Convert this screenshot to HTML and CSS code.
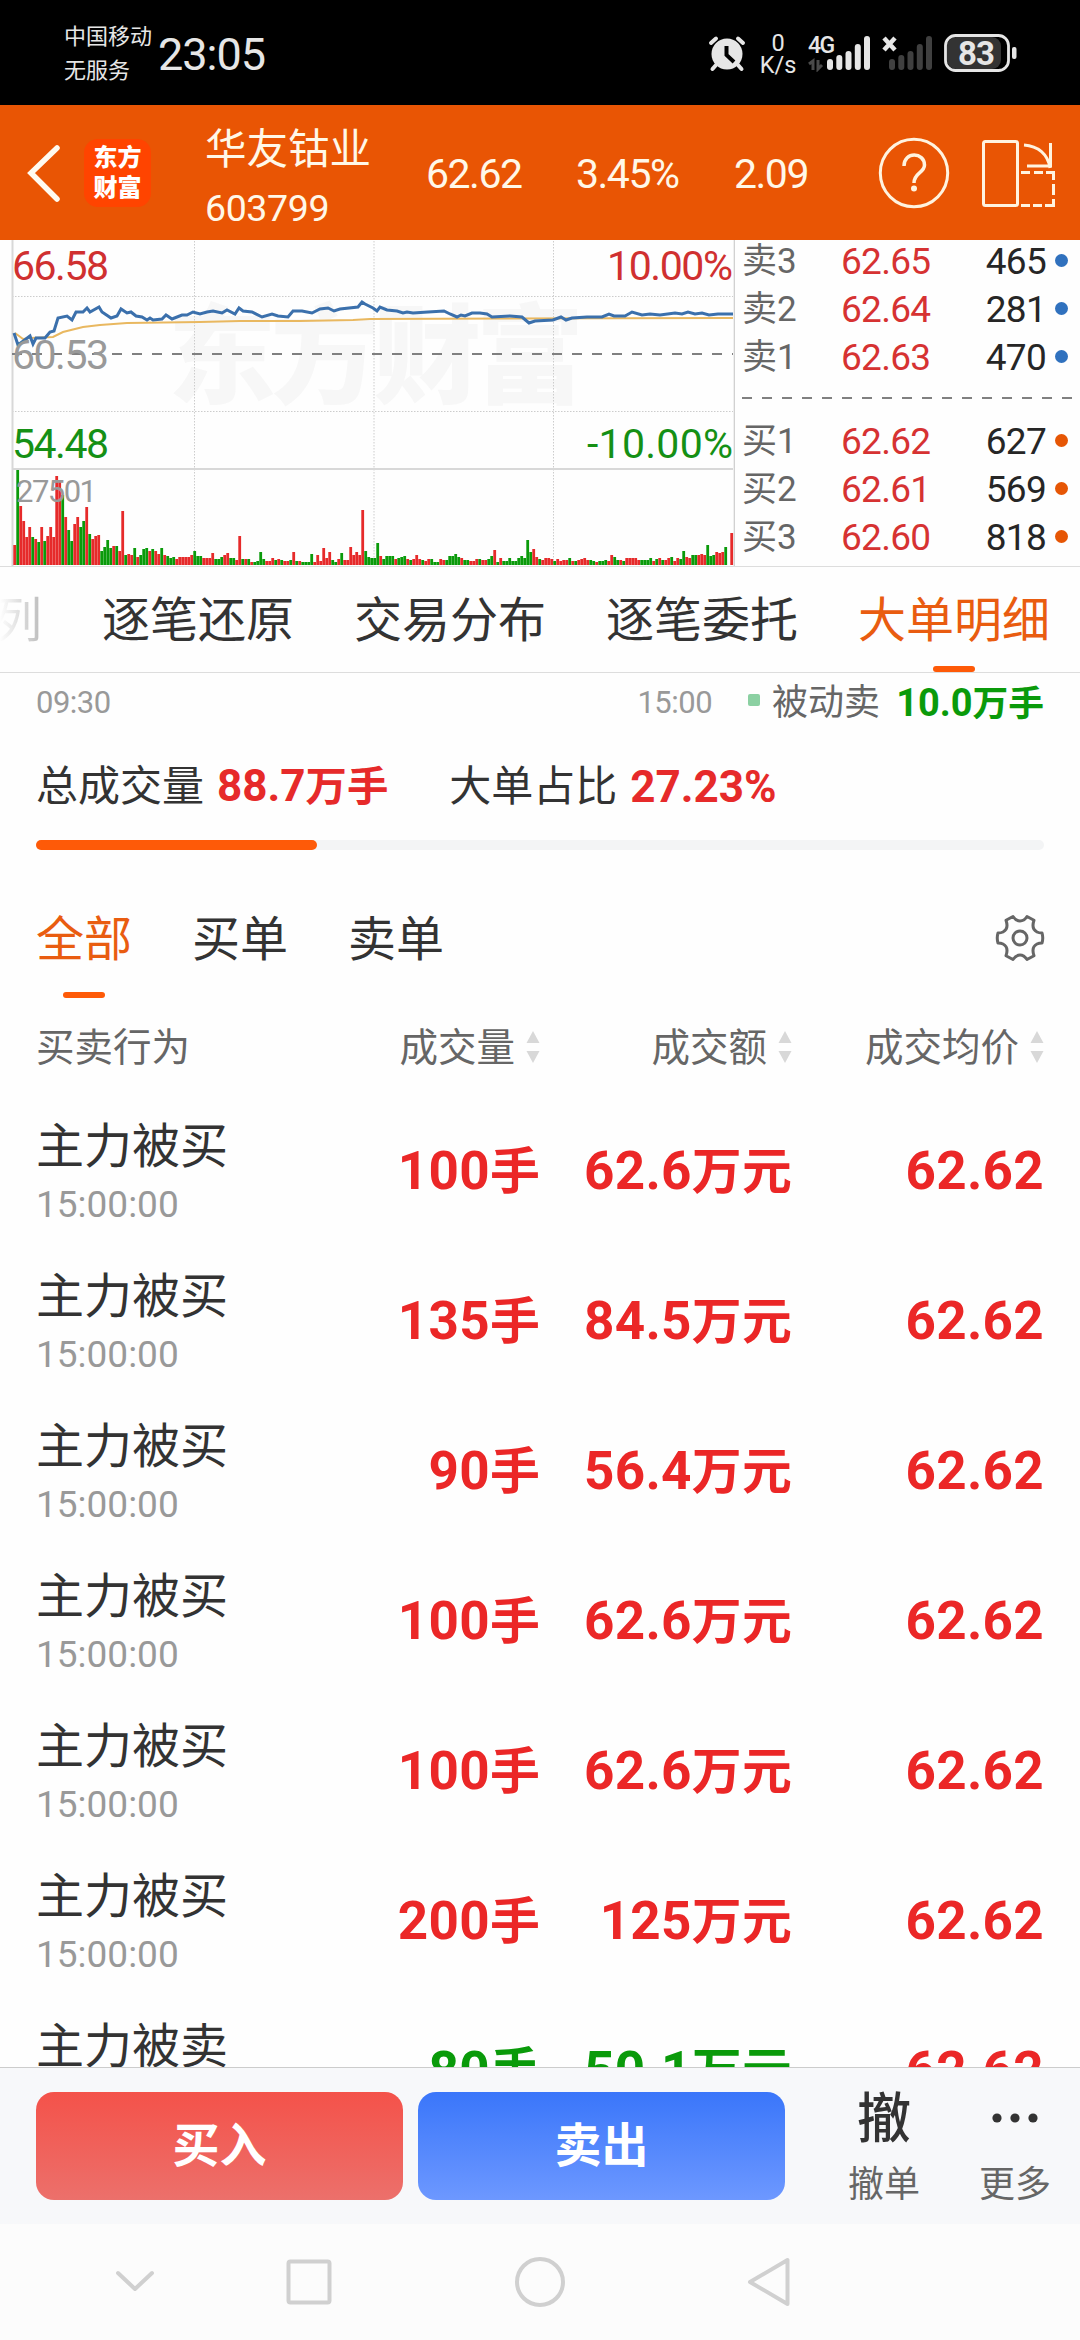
FILE: index.html
```html
<!DOCTYPE html>
<html lang="zh-CN">
<head>
    <meta charset="UTF-8">
    <meta name="viewport" content="width=device-width, initial-scale=1.0">
    <title>华友钴业 603799</title>
    <link rel="stylesheet" href="styles.css">
</head>
<body>
    <div class="statusbar">
        <div class="carrier">
            <span>中国移动</span>
            <span>无服务</span>
        </div>
        <div class="clock">23:05</div>
        <svg class="status-alarm" width="38" height="38" viewBox="0 0 38 38">
            <circle cx="19" cy="20" r="15.500" fill="#e6e6e6"/>
            <path d="M3 9 L8 4.500 M30 4.500 L35 9 M8 31 L4.500 35 M30 31 L33.500 35" stroke="#e6e6e6" stroke-width="4" stroke-linecap="round"/>
            <path d="M18.500 12 V21 L26 28" fill="none" stroke="#000" stroke-width="4"/>
        </svg>
        <div class="netspeed"><span>0</span><span>K/s</span></div>
        <svg class="status-signal" width="64" height="38" viewBox="0 0 64 38">
            <g fill="#e6e6e6">
                <rect x="19" y="25" width="6" height="11" rx="3"/>
                <rect x="28.300" y="21" width="6" height="15" rx="3"/>
                <rect x="37.500" y="17" width="6" height="19" rx="3"/>
                <rect x="46.800" y="10" width="6" height="26" rx="3"/>
                <rect x="56" y="2" width="6" height="34" rx="3"/>
            </g>
            <path d="M1 30 L5 27 V36 M10 26 V35 L14 31" fill="none" stroke="#4a4a4a" stroke-width="3"/>
            <text x="0" y="18.500" class="signal-type">4G</text>
        </svg>
        <svg class="status-nosim" width="52" height="38" viewBox="0 0 52 38">
            <path d="M2 4 L13 16 M13 4 L2 16" stroke="#e6e6e6" stroke-width="4.500"/>
            <g fill="#404040">
                <rect x="7" y="25" width="6" height="11" rx="3"/>
                <rect x="16.300" y="21" width="6" height="15" rx="3"/>
                <rect x="25.500" y="17" width="6" height="19" rx="3"/>
                <rect x="34.800" y="10" width="6" height="26" rx="3"/>
                <rect x="44" y="2" width="6" height="34" rx="3"/>
            </g>
        </svg>
        <svg class="status-battery" width="74" height="38" viewBox="0 0 74 38">
            <rect x="3" y="3" width="54" height="32" rx="9" fill="#333"/>
            <rect x="1.500" y="1.500" width="63" height="35" rx="10" fill="none" stroke="#e6e6e6" stroke-width="2.800"/>
            <rect x="68" y="13" width="4.500" height="12" rx="2" fill="#e6e6e6"/>
            <text x="32" y="30.500" text-anchor="middle" class="battery-num">83</text>
        </svg>
    </div>

    <header class="header">
        <svg class="back" width="36" height="60" viewBox="0 0 36 60">
            <path d="M31 5 L5 30 L31 56" fill="none" stroke="#fffaf0" stroke-width="5.500" stroke-linecap="round"/>
        </svg>
        <div class="logo"><span>东方</span><span>财富</span></div>
        <div class="stock">
            <span class="stock-name">华友钴业</span>
            <span class="stock-code">603799</span>
        </div>
        <div class="quote">
            <span class="q-price">62.62</span>
            <span class="q-pct">3.45%</span>
            <span class="q-chg">2.09</span>
        </div>
        <svg class="help" width="72" height="72" viewBox="0 0 72 72">
            <circle cx="36" cy="36" r="33.700" fill="none" stroke="#fff3df" stroke-width="3"/>
            <path d="M26 29 C26 14 46.500 15 46.500 28 C46.500 36 36 35.500 36 46" fill="none" stroke="#fff3df" stroke-width="3.500"/>
            <circle cx="36" cy="51.500" r="3" fill="#fff3df"/>
        </svg>
        <svg class="rotate" width="76" height="72" viewBox="0 0 76 72">
            <g fill="none" stroke="#fff3df" stroke-width="3">
                <rect x="3.500" y="4.500" width="34" height="64" rx="2"/>
                <path d="M44 8 C58 9 68 17 70 31 M70.500 6 V29 H47"/>
                <path d="M41 35.500 H50 M54 35.500 H63 M66 35.500 H73.500 V43 M73.500 47 V58 M73.500 62 V68.500 H65 M62 68.500 H53 M50 68.500 H41"/>
            </g>
        </svg>
    </header>

    <section class="market">
        <svg class="chart" width="735" height="326" viewBox="0 0 735 326">
            <text x="168" y="155" class="watermark" textLength="416">东方财富</text>
            <g stroke="#ccc" stroke-width="1" stroke-dasharray="1.500 1.500">
                <path d="M12 56.500 H733 M12 171.500 H733 M194.500 1 V325 M374 1 V325 M553.500 1 V325"/>
            </g>
            <path d="M12.500 0 V326 M12 229 H733" stroke="#d8d8d8" stroke-width="2"/>
            <path d="M734.300 0 V326" stroke="#ccc" stroke-width="1.200"/>
            <path d="M12 114 H733" stroke="#808080" stroke-width="2" stroke-dasharray="10 10"/>
            <g id="volume"></g>
            <polyline id="average" fill="none" stroke="#e9b860" stroke-width="2"/>
            <polyline id="price" fill="none" stroke="#3b70ac" stroke-width="3"/>
            <text x="12" y="40" class="axis up" textLength="97">66.58</text>
            <text x="12" y="129" class="axis mid" textLength="97">60.53</text>
            <text x="12" y="218" class="axis down" textLength="97">54.48</text>
            <text x="607" y="40" class="axis up" textLength="126">10.00%</text>
            <text x="587" y="218" class="axis down" textLength="146">-10.00%</text>
            <text x="16" y="262" class="axis vol" textLength="81">27501</text>
        </svg>
        <div class="book">
            <div class="level"><span class="side">卖3</span><span class="price">62.65</span><span class="qty">465</span><i class="dot sell"></i></div>
            <div class="level"><span class="side">卖2</span><span class="price">62.64</span><span class="qty">281</span><i class="dot sell"></i></div>
            <div class="level"><span class="side">卖1</span><span class="price">62.63</span><span class="qty">470</span><i class="dot sell"></i></div>
            <svg class="book-split" width="332" height="36" viewBox="0 0 332 36">
                <path d="M0 16 H332" stroke="#808080" stroke-width="2" stroke-dasharray="10 10"/>
            </svg>
            <div class="level"><span class="side">买1</span><span class="price">62.62</span><span class="qty">627</span><i class="dot buy"></i></div>
            <div class="level"><span class="side">买2</span><span class="price">62.61</span><span class="qty">569</span><i class="dot buy"></i></div>
            <div class="level"><span class="side">买3</span><span class="price">62.60</span><span class="qty">818</span><i class="dot buy"></i></div>
        </div>
    </section>

    <nav class="tabs">
        <span class="tab cut">列</span>
        <span class="tab">逐笔还原</span>
        <span class="tab">交易分布</span>
        <span class="tab">逐笔委托</span>
        <span class="tab active">大单明细</span>
    </nav>

    <main class="detail">
        <div class="axis-row">
            <span class="time-start">09:30</span>
            <span class="time-end">15:00</span>
            <i class="legend"></i>
            <span class="legend-name">被动卖</span>
            <b class="legend-val">10.0<small>万手</small></b>
        </div>
        <div class="summary">
            <span>总成交量</span><b class="sum-vol">88.7<small>万手</small></b>
            <span>大单占比</span><b class="sum-pct">27.23%</b>
        </div>
        <div class="progress"><div class="progress-fill" style="width: 27.900%"></div></div>

        <div class="filters">
            <span class="filter active">全部</span>
            <span class="filter">买单</span>
            <span class="filter">卖单</span>
            <svg class="gear" width="52" height="52" viewBox="0 0 52 52">
                <g fill="none" stroke="#666" stroke-width="3" stroke-linejoin="round">
                    <path d="M19 4.500 Q22 9 26 9 Q30 9 33 4.500 L40 8.300 Q37 17 43 20 Q45 21 48 21 Q49.500 26 48 31 Q45 31 43 32 Q37 35 40 43.700 L33 47.500 Q30 43 26 43 Q22 43 19 47.500 L12 43.700 Q15 35 9 32 Q7 31 4 31 Q2.500 26 4 21 Q7 21 9 20 Q15 17 12 8.300 Z"/>
                    <circle cx="26" cy="26" r="7"/>
                </g>
            </svg>
        </div>

        <div class="row thead">
            <span class="c-act">买卖行为</span>
            <span class="c-vol">成交量<svg class="sort" width="14" height="34" viewBox="0 0 14 34"><path d="M7 1 L13.500 13 H.5 Z M7 33 L13.500 21 H.5 Z"/></svg></span>
            <span class="c-amt">成交额<svg class="sort" width="14" height="34" viewBox="0 0 14 34"><path d="M7 1 L13.500 13 H.5 Z M7 33 L13.500 21 H.5 Z"/></svg></span>
            <span class="c-avg">成交均价<svg class="sort" width="14" height="34" viewBox="0 0 14 34"><path d="M7 1 L13.500 13 H.5 Z M7 33 L13.500 21 H.5 Z"/></svg></span>
        </div>

        <div class="list">
            <div class="row order">
                <div class="c-act"><span>主力被买</span><time>15:00:00</time></div>
                <b class="c-vol">100<small>手</small></b><b class="c-amt">62.6<small>万元</small></b><b class="c-avg">62.62</b>
            </div>
            <div class="row order">
                <div class="c-act"><span>主力被买</span><time>15:00:00</time></div>
                <b class="c-vol">135<small>手</small></b><b class="c-amt">84.5<small>万元</small></b><b class="c-avg">62.62</b>
            </div>
            <div class="row order">
                <div class="c-act"><span>主力被买</span><time>15:00:00</time></div>
                <b class="c-vol">90<small>手</small></b><b class="c-amt">56.4<small>万元</small></b><b class="c-avg">62.62</b>
            </div>
            <div class="row order">
                <div class="c-act"><span>主力被买</span><time>15:00:00</time></div>
                <b class="c-vol">100<small>手</small></b><b class="c-amt">62.6<small>万元</small></b><b class="c-avg">62.62</b>
            </div>
            <div class="row order">
                <div class="c-act"><span>主力被买</span><time>15:00:00</time></div>
                <b class="c-vol">100<small>手</small></b><b class="c-amt">62.6<small>万元</small></b><b class="c-avg">62.62</b>
            </div>
            <div class="row order">
                <div class="c-act"><span>主力被买</span><time>15:00:00</time></div>
                <b class="c-vol">200<small>手</small></b><b class="c-amt">125<small>万元</small></b><b class="c-avg">62.62</b>
            </div>
            <div class="row order sold">
                <div class="c-act"><span>主力被卖</span></div>
                <b class="c-vol">80<small>手</small></b><b class="c-amt">50.1<small>万元</small></b><b class="c-avg">62.62</b>
            </div>
        </div>
    </main>

    <footer class="trade">
        <button class="btn btn-buy">买入</button>
        <button class="btn btn-sell">卖出</button>
        <div class="action cancel">
            <span class="action-icon">撤</span>
            <span class="action-name">撤单</span>
        </div>
        <div class="action more">
            <svg class="action-icon" width="48" height="54" viewBox="0 0 48 54">
                <g fill="#333"><circle cx="6" cy="26" r="4.600"/><circle cx="24" cy="26" r="4.600"/><circle cx="42" cy="26" r="4.600"/></g>
            </svg>
            <span class="action-name">更多</span>
        </div>
    </footer>

    <div class="navbar">
        <svg width="1080" height="116" viewBox="0 0 1080 116">
            <g fill="none" stroke="#d0d0d0" stroke-width="4" stroke-linecap="round" stroke-linejoin="round">
                <path d="M118 49 L135 65 L152 49"/>
                <rect x="288.500" y="37.500" width="41" height="41" rx="2"/>
                <circle cx="540" cy="58" r="23"/>
                <path d="M787.500 36 V80 L750 58 Z"/>
            </g>
        </svg>
    </div>

    <script src="chart.js"></script>
</body>
</html>
```

FILE: styles.css
```css
* {
    box-sizing: border-box;
}
body {
    margin: 0;
    width: 1080px;
    height: 2340px;
    overflow: hidden;
    display: flex;
    flex-direction: column;
    background: #fefefe;
    color: #333;
    font-family: Roboto, "Noto Sans CJK SC", sans-serif;
}
span, b, time {
    white-space: nowrap;
}
small {
    font-size: 0.94em;
}

/* status bar */
.statusbar {
    flex: none;
    height: 105px;
    padding: 0 59px 0 64px;
    background: #000;
    color: #e6e6e6;
    display: flex;
    align-items: center;
}
.carrier {
    flex: none;
    width: 94px;
    display: flex;
    flex-direction: column;
    font-size: 22px;
    line-height: 34px;
    padding-top: 3px;
}
.clock {
    width: 550px;
    padding-top: 4px;
    font-size: 45px;
    line-height: 50px;
    letter-spacing: -1px;
}
.statusbar svg {
    flex: none;
}
.status-alarm {
    margin-right: 14px;
}
.netspeed {
    flex: none;
    width: 36px;
    margin-right: 12px;
    display: flex;
    flex-direction: column;
    align-items: center;
    font-size: 23.500px;
    line-height: 22px;
    padding-top: 3px;
}
.signal-type {
    font-size: 23px;
    font-weight: 500;
    letter-spacing: -1.5px;
    fill: #e6e6e6;
}
.status-nosim {
    margin-left: 10px;
    margin-right: 10px;
}
.battery-num {
    font-size: 33px;
    font-weight: 700;
    letter-spacing: -1px;
    fill: #e6e6e6;
}

/* header */
.header {
    flex: none;
    height: 135px;
    padding: 0 24px 0 26px;
    background: #e95504;
    color: #fff8e8;
    display: flex;
    align-items: center;
}
.logo {
    width: 67px;
    height: 68px;
    margin-left: 22px;
    border-radius: 14px;
    background: #ff4400;
    color: #fff;
    display: flex;
    flex-direction: column;
    align-items: center;
    padding-top: 4px;
    font-size: 24px;
    font-weight: 900;
    line-height: 30px;
}
.stock {
    width: 221px;
    margin-left: 54px;
    padding-top: 13px;
    display: flex;
    flex-direction: column;
}
.stock-name {
    font-size: 41.500px;
    line-height: 58px;
}
.stock-code {
    font-size: 37.500px;
    line-height: 58px;
    letter-spacing: -0.4px;
}
.quote {
    display: flex;
    width: 452px;
    padding-top: 3px;
    font-size: 41px;
    line-height: 50px;
    letter-spacing: -1.5px;
}
.q-price {
    width: 150px;
}
.q-pct {
    width: 158px;
}
.rotate {
    margin-left: auto;
}

/* chart and order book */
.market {
    flex: none;
    height: 327px;
    display: flex;
    border-bottom: 1px solid #ddd;
}
.chart {
    flex: none;
    display: block;
}
.axis {
    font-size: 41px;
}
.up {
    fill: #d03030;
}
.down {
    fill: #159015;
}
.mid {
    fill: #999;
}
.vol {
    font-size: 31px;
    fill: #999;
}
.watermark {
    font-size: 108px;
    font-weight: 900;
    fill: #f7f7f7;
}
.book {
    flex: 1;
    padding-left: 7px;
    margin-top: -2px;
}
.level {
    display: flex;
    align-items: center;
    height: 48px;
    font-size: 37px;
    line-height: 48px;
    letter-spacing: -0.7px;
}
.side {
    width: 99px;
    font-size: 35px;
    letter-spacing: 0;
    color: #666;
}
.price {
    width: 106px;
    color: #d63232;
}
.qty {
    width: 99px;
    text-align: right;
    color: #262626;
}
.dot {
    width: 13px;
    height: 13px;
    margin-left: 9px;
    margin-bottom: 3px;
    border-radius: 50%;
}
.dot.sell {
    background: #3071be;
}
.dot.buy {
    background: #e65605;
}
.book-split {
    display: block;
}

/* tabs */
.tabs {
    flex: none;
    height: 106px;
    display: flex;
    gap: 60px;
    border-bottom: 1px solid #ddd;
}
.tab {
    position: relative;
    font-size: 48px;
    line-height: 108px;
}
.tab.cut {
    width: 42px;
    direction: rtl;
    background: linear-gradient(90deg, #fefefe, #bbb);
    -webkit-background-clip: text;
    background-clip: text;
    color: transparent;
}
.tab.active, .filter.active {
    color: #e95c10;
}
.tab.active::after, .filter.active::after {
    content: "";
    position: absolute;
    left: 50%;
    bottom: 0;
    width: 42px;
    height: 6px;
    margin-left: -21px;
    border-radius: 3px;
    background: #fe5a08;
}

/* big order detail */
.detail {
    flex: 1;
    min-height: 0;
    overflow: hidden;
    padding: 0 36px;
}
.axis-row {
    display: flex;
    align-items: center;
    height: 60px;
    font-size: 31px;
    line-height: 60px;
    color: #999;
}
.time-start, .time-end {
    letter-spacing: -0.5px;
}
.time-end {
    margin-left: auto;
}
.legend {
    width: 12px;
    height: 12px;
    margin: 0 12px 6px 36px;
    border-radius: 2px;
    background: #8bd0a2;
}
.legend-name {
    font-size: 36px;
    line-height: 58px;
    color: #666;
}
.legend-val {
    margin-left: 16px;
    font-size: 38px;
    line-height: 60px;
    color: #0a9a0a;
}
.summary {
    display: flex;
    align-items: center;
    height: 107px;
    font-size: 42px;
    line-height: 106px;
}
.summary b {
    margin-left: 13px;
    font-size: 44px;
    color: #e62a2a;
}
.summary .sum-vol {
    margin-right: 61px;
}
.progress {
    height: 10px;
    border-radius: 5px;
    background: #f3f4f5;
}
.progress-fill {
    height: 10px;
    border-radius: 5px;
    background: #fe5a08;
}
.filters {
    display: flex;
    align-items: flex-start;
    gap: 60px;
    height: 149px;
    padding-top: 28px;
}
.filter {
    position: relative;
    height: 120px;
    font-size: 48px;
    line-height: 123px;
}
.gear {
    margin: 34px -2px 0 auto;
}
.row {
    display: grid;
    grid-template-columns: 322px 182px 252px 252px;
}
.thead {
    height: 100px;
    line-height: 97px;
    font-size: 38.500px;
    color: #666;
}
.thead .c-act {
    text-align: left;
}
.c-vol, .c-amt, .c-avg {
    text-align: right;
}
.sort {
    margin-left: 11px;
    vertical-align: -3px;
    fill: #d8d8d8;
}
.order {
    height: 150px;
    font-size: 53px;
    line-height: 144px;
    color: #eb2727;
}
.order .c-act {
    display: flex;
    flex-direction: column;
    padding-top: 18px;
    font-size: 48px;
    line-height: 60px;
    color: #333;
}
.order time {
    font-size: 37px;
    line-height: 56px;
    color: #999;
}
.order b {
    letter-spacing: 0.3px;
}
.order.sold .c-vol, .order.sold .c-amt {
    color: #0a9a0a;
}

/* trade bar */
.trade {
    flex: none;
    height: 157px;
    padding: 24px 29px 0 36px;
    border-top: 1px solid #ccc;
    background: #f7f8fa;
    display: flex;
    align-items: flex-start;
}
.btn {
    width: 367px;
    height: 108px;
    padding: 0;
    border: none;
    border-radius: 18px;
    color: #fff;
    font-family: inherit;
    font-size: 47px;
    font-weight: 700;
    line-height: 108px;
}
.btn-buy {
    background: linear-gradient(#f4524a, #ec706b);
}
.btn-sell {
    margin-left: 15px;
    background: linear-gradient(#3a76fa, #6d98ff);
}
.action {
    width: 72px;
    display: flex;
    flex-direction: column;
    align-items: center;
}
.action .action-icon {
    height: 54px;
    font-size: 54px;
    font-weight: 500;
    line-height: 56px;
}
.action-name {
    margin-top: 15px;
    font-size: 36px;
    line-height: 48px;
    color: #666;
}
.cancel {
    margin-left: 63px;
}
.more {
    margin-left: auto;
}

/* system navigation */
.navbar {
    flex: none;
    height: 116px;
    background: #fcfcfc;
}
.navbar svg {
    display: block;
}
```

FILE: chart.js
```js
// one value per minute, positive = red bar, negative = green bar
const volumes = [
    20,-95,59,44,28,38,-28,26,-23,38,-24,29,38,28,89,83,-70,48,-35,-24,41,48,-38,-44,58,-31,26,29,30,-14,
    -18,-25,-17,19,-19,14,54,-10,11,10,-17,8,-10,-16,-17,14,-16,14,11,-17,10,-9,-7,-8,6,8,8,8,8,10,
    -14,-9,-9,7,7,7,12,-6,-6,-8,10,12,-7,-7,5,29,-6,6,-6,3,-3,-4,-13,-6,4,4,7,-5,6,-5,
    4,4,-5,13,-4,4,-3,-3,-3,-11,3,10,4,17,7,13,-5,-3,6,-12,5,5,18,10,13,10,55,-14,-8,-7,
    -7,-22,9,-6,-9,-9,-9,6,-7,-8,-9,6,-5,6,10,6,-5,4,6,-6,-3,-3,6,5,-5,-9,-9,-11,-8,7,
    -5,-5,4,4,6,-6,5,5,-6,-9,15,-3,7,-4,-4,-7,-4,-4,-7,-9,-7,-25,-13,16,8,-6,5,7,7,6,
    -4,6,4,5,5,-7,4,-4,5,6,7,5,-5,-4,3,-4,-4,-5,4,10,-8,-5,5,-4,7,7,7,7,5,-5,
    -5,-5,-7,4,-6,7,-5,5,7,-8,4,7,-6,-14,8,7,-10,-10,10,11,10,-20,-9,-10,13,12,13,-18,0,32
];

const price = [
    [14,93],[18,105],[30,96],[33,104],[36,98],[45,98],[50,92],[54,91],[58,78],[67,76],[72,80],[76,72],[83,72],[87,68],
    [90,72],[99,67],[102,72],[111,78],[117,76],[121,69],[127,73],[131,72],[136,76],[142,77],[147,80],[150,78],[153,80],
    [162,79],[166,75],[172,79],[182,75],[187,75],[193,72],[200,74],[207,72],[213,71],[222,73],[227,70],[235,74],[239,68],
    [243,71],[252,72],[262,77],[272,74],[278,76],[288,77],[293,71],[302,71],[312,73],[320,69],[328,68],[334,71],[340,69],
    [358,67],[362,62],[365,64],[373,68],[377,71],[380,67],[387,70],[397,71],[403,73],[407,72],[413,73],[428,72],[444,71],
    [450,74],[457,77],[461,75],[465,76],[472,73],[480,73],[487,74],[492,77],[510,76],[522,77],[529,83],[535,81],[553,80],
    [561,77],[566,80],[572,78],[587,77],[602,77],[609,74],[614,76],[625,76],[632,72],[642,75],[650,74],[660,75],[675,73],
    [682,74],[688,72],[695,74],[702,73],[709,75],[718,74],[733,74]
];

const average = [
    [15,93],[23,99],[30,98],[53,97],[63,92],[83,87],[100,85],[127,83],[200,82],[240,81],[300,81],[353,80],[370,79],[733,78]
];

document.getElementById('price').setAttribute('points', price.join(' '));
document.getElementById('average').setAttribute('points', average.join(' '));

const group = document.getElementById('volume');
volumes.forEach((v, i) => {
    const h = Math.abs(v);
    const bar = document.createElementNS('http://www.w3.org/2000/svg', 'rect');
    bar.setAttribute('x', 13.3 + i * 3);
    bar.setAttribute('y', 325 - h);
    bar.setAttribute('width', 2.8);
    bar.setAttribute('height', h);
    bar.setAttribute('fill', v > 0 ? '#e62a2a' : '#0a9a0a');
    group.appendChild(bar);
});
```
